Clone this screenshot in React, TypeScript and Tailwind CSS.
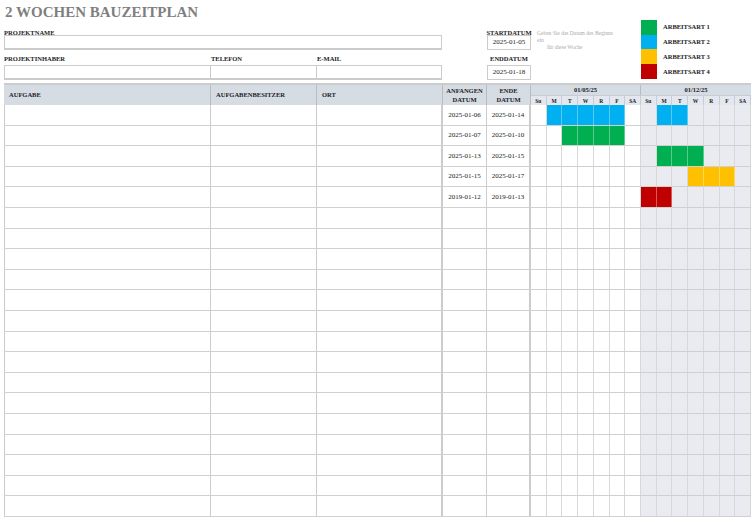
import React from "react";

const GREEN = "#00b050", BLUE = "#00b0f0", YEL = "#ffc000", RED = "#c00000";
const rows: { s: string; e: string }[] = [
  { s: "2025-01-06", e: "2025-01-14" },
  { s: "2025-01-07", e: "2025-01-10" },
  { s: "2025-01-13", e: "2025-01-15" },
  { s: "2025-01-15", e: "2025-01-17" },
  { s: "2019-01-12", e: "2019-01-13" },
];
const fills: Record<number, Record<number, string>> = {
  0: { 1: BLUE, 2: BLUE, 3: BLUE, 4: BLUE, 5: BLUE, 8: BLUE, 9: BLUE },
  1: { 2: GREEN, 3: GREEN, 4: GREEN, 5: GREEN },
  2: { 8: GREEN, 9: GREEN, 10: GREEN },
  3: { 10: YEL, 11: YEL, 12: YEL },
  4: { 7: RED, 8: RED },
};
const days = ["Su", "M", "T", "W", "R", "F", "SA"];
const grid = "grid grid-cols-[207px_106px_126px_44px_44px_repeat(14,1fr)]";

export default function App() {
  return (
    <div className="w-[753px] h-[520px] bg-white overflow-hidden text-[#222] relative" style={{ fontFamily: '"Liberation Serif", serif' }}>
      <div className="pl-[5px] pt-[1px] text-[15px] font-bold text-[#7f7f7f] h-[24px]">2 WOCHEN BAUZEITPLAN</div>
      <div className="flex pl-[4px] h-[59px]">
        <div className="w-[438px] flex flex-col">
          <div className="text-[6.5px] font-semibold h-[11px] pt-[4px]">PROJEKTNAME</div>
          <div className="h-[15px] border border-[#ccc] border-b-2"></div>
          <div className="flex text-[6.5px] font-semibold h-[15px] items-end pb-[1px]">
            <div className="w-[207px]">PROJEKTINHABER</div>
            <div className="w-[106px]">TELEFON</div>
            <div>E-MAIL</div>
          </div>
          <div className="flex h-[15px]">
            <div className="w-[207px] border border-[#ccc] border-b-2"></div>
            <div className="w-[106px] border border-[#ccc] border-b-2 border-l-0"></div>
            <div className="flex-1 border border-[#ccc] border-b-2 border-l-0"></div>
          </div>
        </div>
        <div className="ml-[45px] w-[44px] flex flex-col items-center">
          <div className="text-[6.5px] font-semibold h-[11px] pt-[4px]">STARTDATUM</div>
          <div className="w-full h-[15px] border border-[#ccc] text-[7px] flex items-center justify-center">2025-01-05</div>
          <div className="text-[6.5px] font-semibold h-[15px] flex items-end pb-[1px]">ENDDATUM</div>
          <div className="w-full h-[15px] border border-[#ccc] text-[7px] flex items-center justify-center">2025-01-18</div>
        </div>
        <div className="ml-[6px] w-[100px] text-[5.5px] text-[#aaa] leading-[7px] pt-[6px]">
          <div>Geben Sie das Datum des Beginns</div><div>ein</div><div className="pl-[10px]">für diese Woche</div>
        </div>
        <div className="ml-[4px] -mt-[4px] flex flex-col">
          {[[GREEN, "ARBEITSART 1"], [BLUE, "ARBEITSART 2"], [YEL, "ARBEITSART 3"], [RED, "ARBEITSART 4"]].map(([c, l]) => (
            <div key={l} className="flex items-center h-[14.7px]">
              <div className="w-[16px] h-full" style={{ background: c }}></div>
              <div className="ml-[6px] text-[6.5px] font-semibold">{l}</div>
            </div>
          ))}
        </div>
      </div>
      <div className="ml-[4px] w-[747px] border-t-2 border-[#ccc]">
        <div className={grid + " h-[20px] bg-[#d6dce4] text-[6.5px] font-bold"}>
          <div className="row-span-2 flex items-center pl-[5px] border-r border-[#bbb]">AUFGABE</div>
          <div className="row-span-2 flex items-center pl-[5px] border-r border-[#bbb]">AUFGABENBESITZER</div>
          <div className="row-span-2 flex items-center pl-[5px] border-r border-[#bbb]">ORT</div>
          <div className="row-span-2 flex items-center justify-center text-center leading-[9px] border-r border-[#bbb]">ANFANGEN<br />DATUM</div>
          <div className="row-span-2 flex items-center justify-center text-center leading-[9px] border-r border-[#bbb]">ENDE<br />DATUM</div>
          <div className="col-span-7 flex items-center justify-center border-r border-[#bbb]">01/05/25</div>
          <div className="col-span-7 flex items-center justify-center">01/12/25</div>
          {[...days, ...days].map((d, i) => (
            <div key={i} className="flex items-center justify-center text-[5.5px] border-r border-t border-[#c8ccd4] bg-[#e4e8ee]">{d}</div>
          ))}
        </div>
        {Array.from({ length: 20 }).map((_, r) => (
          <div key={r} className={grid + " h-[20.6px] text-[7px] border-b border-[#d0d0d0]"}>
            <div className="border-r border-[#ccc] border-l"></div>
            <div className="border-r border-[#ccc]"></div>
            <div className="border-r-2 border-[#ccc]"></div>
            <div className="border-r border-[#ccc] flex items-center justify-center">{rows[r]?.s}</div>
            <div className="border-r-2 border-[#ccc] flex items-center justify-center">{rows[r]?.e}</div>
            {Array.from({ length: 14 }).map((_, c) => (
              <div key={c} className={"border-r border-[#d8d8d8] " + (c >= 7 ? "bg-[#e9ebf0]" : "bg-white")} style={fills[r]?.[c] ? { background: fills[r][c], borderColor: "rgba(255,255,255,0.35)" } : undefined}></div>
            ))}
          </div>
        ))}
      </div>
    </div>
  );
}
